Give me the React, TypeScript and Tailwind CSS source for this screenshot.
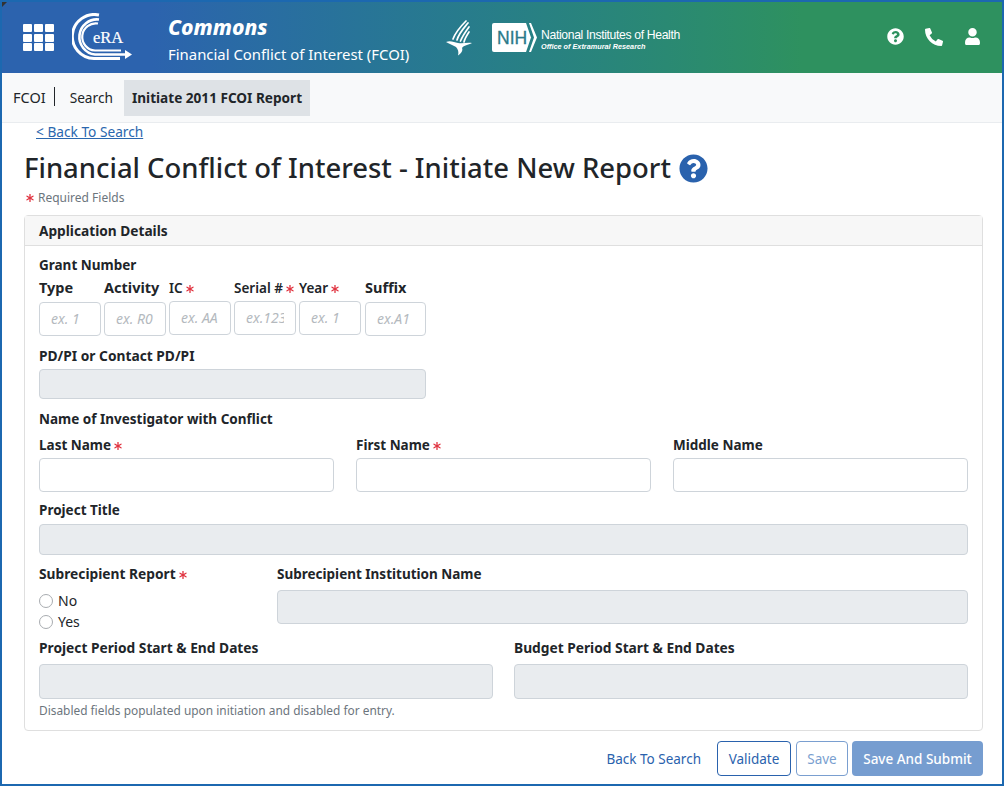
import { FaQuestionCircle, FaPhoneAlt, FaUser } from 'react-icons/fa';

const labelCls = 'block h-5 text-[13.5px] leading-5 font-bold text-[#212529] whitespace-nowrap';
const wideLabelCls = 'block h-5 text-[13.75px] leading-5 font-bold text-[#212529] whitespace-nowrap';
const inputCls = 'block border border-[#ced4da] rounded-[4px] bg-white';
const disabledCls = 'block border border-[#ced4da] rounded-[4px] bg-[#e9ecef]';

function Star({ className = 'ml-[3px]' }: { className?: string }) {
  return (
    <svg width="8" height="8" viewBox="0 0 8 8" className={`inline-block align-[0px] ${className}`}>
      <g stroke="#e0323f" strokeWidth="1.3" strokeLinecap="round">
        <path d="M4 0.5 V7.5" />
        <path d="M1 2.2 L7 5.8" />
        <path d="M7 2.2 L1 5.8" />
      </g>
    </svg>
  );
}

function EraLogo() {
  return (
    <svg width="60" height="49" viewBox="0 0 60 49" fill="none" className="shrink-0">
      <g stroke="#fff" fill="none" strokeLinecap="butt">
        <path d="M27 2 A 22 22 0 1 0 22 45.5 H 48" strokeWidth="3" />
        <path d="M27 6.5 A 17.6 17.6 0 1 0 23 41.5 H 54" strokeWidth="2.6" />
        <path d="M26 10.5 A 13.6 13.6 0 1 0 23 37.5 H 49" strokeWidth="2.2" />
      </g>
      <path d="M53 37 L60 41.6 L53 46 Z" fill="#fff" />
      <text x="21" y="30" fill="#fff" stroke="#fff" strokeWidth="0.2" fontSize="16.5" fontFamily="'Liberation Serif', serif">
        eRA
      </text>
    </svg>
  );
}

function Eagle() {
  return (
    <svg width="27" height="36" viewBox="0 0 27 36" fill="none" className="shrink-0">
      <g stroke="#fff" strokeWidth="1.7" strokeLinecap="round">
        <path d="M21 1 C 16 6, 11 11, 8 19" />
        <path d="M23 3 C 19 8, 14 13, 12 20" />
        <path d="M24 7 C 21 11, 18 15, 15.5 21" />
        <path d="M24 12 C 22 15, 20 18, 19 22" />
      </g>
      <path d="M1 22 C 5 20, 9 22, 13 23 C 18 24, 22 22, 27 23 C 23 25, 19 25, 17 28 C 18 30, 17 33, 13 35.5 C 14 32, 13 29, 11 27 C 8 25, 4 24, 1 22 Z" fill="#fff" />
    </svg>
  );
}

function NihLogo() {
  return (
    <div className="flex items-center shrink-0">
      <svg width="45" height="29" viewBox="0 0 45 29" className="shrink-0">
        <path d="M2 0 H 34 L 39 14.5 L 34 29 H 2 A 2 2 0 0 1 0 27 V 2 A 2 2 0 0 1 2 0 Z" fill="#fff" />
        <path d="M37 0 H 39 L 45 14.5 L 39 29 H 37 L 42 14.5 Z" fill="#fff" />
        <text x="5" y="20.5" fill="#2a7a8a" stroke="#2a7a8a" strokeWidth="0.3" fontSize="17.5" fontFamily="'Liberation Sans', sans-serif">
          NIH
        </text>
      </svg>
      <div className="ml-[4px] font-['Liberation_Sans',sans-serif] text-white mt-[4px]">
        <div className="text-[12.2px] leading-[13px] tracking-[-0.35px]">National Institutes of Health</div>
        <div className="text-[7.3px] leading-[9px] italic font-bold">Office of Extramural Research</div>
      </div>
    </div>
  );
}

function AppGrid() {
  return (
    <div className="grid grid-cols-3 gap-x-[2px] gap-y-[1.5px] w-[31px] shrink-0">
      {Array.from({ length: 9 }).map((_, i) => (
        <div key={i} className="h-[8px] bg-white rounded-[1px]" />
      ))}
    </div>
  );
}

const grantCols = [
  { label: 'Type', ph: 'ex. 1', low: true, req: false, w: 'w-[62px]', ml: '' },
  { label: 'Activity', ph: 'ex. R0', low: true, req: false, w: 'w-[62px]', ml: 'ml-[3px]' },
  { label: 'IC', ph: 'ex. AA', low: false, req: true, w: 'w-[62px]', ml: 'ml-[3px]' },
  { label: 'Serial #', ph: 'ex.123', low: false, req: true, w: 'w-[62px]', ml: 'ml-[3px]' },
  { label: 'Year', ph: 'ex. 1', low: false, req: true, w: 'w-[62px]', ml: 'ml-[3px]' },
  { label: 'Suffix', ph: 'ex.A1', low: true, req: false, w: 'w-[61px]', ml: 'ml-[4px]' },
];

function GrantCol({ label, ph, low, req, w, ml }: (typeof grantCols)[number]) {
  return (
    <div className={`${w} ${ml}`}>
      {low ? (
        <div className="text-[14.5px] leading-5 h-5 font-bold text-[#212529] whitespace-nowrap">{label}</div>
      ) : (
        <div className="text-[13.5px] leading-5 h-5 mt-[1px] font-semibold text-[#212529] whitespace-nowrap">
          {label}
          {req && <Star />}
        </div>
      )}
      <div
        className={`${inputCls} h-[34px] px-[11px] text-[14px] leading-[31px] italic text-[#b4b9be] ${
          low ? 'mt-[5px]' : 'mt-[3px]'
        }`}
      >
        <div className="overflow-hidden whitespace-nowrap">{ph}</div>
      </div>
    </div>
  );
}

function Radio({ label }: { label: string }) {
  return (
    <div className="flex items-center h-[21px]">
      <span className="w-[14px] h-[14px] rounded-full border border-[#a8acb0] bg-white shrink-0" />
      <span className="ml-[5px] text-[14px] text-[#212529]">{label}</span>
    </div>
  );
}

export default function App() {
  return (
    <div className="relative w-[1004px] h-[786px] border-2 border-[#1c68b0] bg-white overflow-hidden font-['Noto_Sans','Open_Sans',sans-serif] text-[#212529]">
      <svg width="5" height="5" viewBox="0 0 5 5" className="absolute left-0 top-0">
        <path d="M0 0 H5 L0 5 Z" fill="#333" />
      </svg>

      {/* banner */}
      <header className="h-[71px] flex items-center bg-gradient-to-r from-[#2c63ae] from-[15%] to-[#2e915f] to-[80%] text-white pl-[21px]">
        <AppGrid />
        <div className="ml-[18px] mt-[-1px]">
          <EraLogo />
        </div>
        <div className="ml-[36px] w-[270px] mt-[4px]">
          <div className="text-[21px] leading-7 font-extrabold italic">Commons</div>
          <div className="text-[14.9px] leading-6 mt-[1px] whitespace-nowrap">Financial Conflict of Interest (FCOI)</div>
        </div>
        <div className="ml-[7px] mt-[1px]">
          <Eagle />
        </div>
        <div className="ml-[20px]">
          <NihLogo />
        </div>
        <div className="ml-auto flex items-center gap-[21px] pr-[21px] mt-[-2px]">
          <FaQuestionCircle className="text-[17px]" />
          <FaPhoneAlt className="text-[18px]" />
          <FaUser className="text-[17px]" />
        </div>
      </header>

      {/* sub nav */}
      <nav className="h-[50px] bg-[#f8f9fa] border-b border-[#e9ecef] flex items-start pl-[11px] pt-[7px]">
        <div className="h-[36px] flex items-center text-[14.5px] pr-[9px] relative">
          FCOI
          <span className="absolute right-0 top-[7px] w-px h-[19px] bg-[#212529]" />
        </div>
        <div className="h-[36px] flex items-center text-[13.7px] ml-[15px]">Search</div>
        <div className="h-[36px] flex items-center text-[13.6px] font-bold bg-[#dee2e6] px-[8px] ml-[11px]">Initiate 2011 FCOI Report</div>
      </nav>

      <main className="pl-[22px] pr-[19px]">
        <div className="pl-[12px] h-[18px] text-[13.7px] leading-[17px]">
          <a className="text-[#2a67ae] underline">&lt; Back To Search</a>
        </div>
        <div className="flex items-center h-[38px] mt-[8px]">
          <h1 className="text-[27.45px] leading-[38px] font-medium whitespace-nowrap">Financial Conflict of Interest - Initiate New Report</h1>
          <FaQuestionCircle className="ml-[8px] text-[#2a62ad] text-[29px]" />
        </div>
        <div className="h-5 mt-[1px] text-[12px] leading-5 text-[#6c757d] pl-[2px]">
          <Star className="mr-[4px]" />
          Required Fields
        </div>

        <section className="mt-[7px] border border-[#dfdfdf] rounded-[4px] h-[516px]">
          <div className="h-[30px] bg-[#f7f7f7] border-b border-[#dfdfdf] px-[14px] text-[13.7px] leading-[30px] font-bold">Application Details</div>
          <div className="px-[14px] pt-[9px]">
            <div className={labelCls}>Grant Number</div>
            <div className="flex items-start mt-[2px]">
              {grantCols.map((c) => (
                <GrantCol key={c.label} {...c} />
              ))}
            </div>

            <div className={`${wideLabelCls} mt-[10px]`}>PD/PI or Contact PD/PI</div>
            <div className={`${disabledCls} w-[387px] h-[30px] mt-[3px]`} />

            <div className={`${labelCls} mt-[10px]`}>Name of Investigator with Conflict</div>
            <div className="grid grid-cols-3 gap-x-[22px] mt-[6px]">
              {[
                { label: 'Last Name', req: true },
                { label: 'First Name', req: true },
                { label: 'Middle Name', req: false },
              ].map((f) => (
                <div key={f.label}>
                  <div className={labelCls}>
                    {f.label}
                    {f.req && <Star />}
                  </div>
                  <div className={`${inputCls} h-[34px] mt-[3px]`} />
                </div>
              ))}
            </div>

            <div className={`${labelCls} mt-[8px]`}>Project Title</div>
            <div className={`${disabledCls} h-[31px] mt-[4px]`} />

            <div className="flex mt-[9px]">
              <div className="w-[238px] shrink-0">
                <div className={wideLabelCls}>
                  Subrecipient Report
                  <Star />
                </div>
                <div className="mt-[6px]">
                  <Radio label="No" />
                  <Radio label="Yes" />
                </div>
              </div>
              <div className="flex-1">
                <div className={labelCls}>Subrecipient Institution Name</div>
                <div className={`${disabledCls} h-[34px] mt-[6px]`} />
              </div>
            </div>

            <div className="grid grid-cols-2 gap-x-[21px] mt-[6px]">
              <div>
                <div className={wideLabelCls}>Project Period Start &amp; End Dates</div>
                <div className={`${disabledCls} h-[35px] mt-[6px]`} />
              </div>
              <div>
                <div className={wideLabelCls}>Budget Period Start &amp; End Dates</div>
                <div className={`${disabledCls} h-[35px] mt-[6px]`} />
              </div>
            </div>
            <div className="h-5 mt-[1px] text-[11.9px] leading-5 text-[#6c757d]">Disabled fields populated upon initiation and disabled for entry.</div>
          </div>
        </section>

        <div className="flex justify-end items-center mt-[10px] text-[13.5px]">
          <a className="text-[#2a62ad] mr-[16px] pt-[1px]">Back To Search</a>
          <button className="h-[35px] w-[74px] pt-[1px] border border-[#2a62ad] rounded-[4px] text-[#2a62ad]">Validate</button>
          <button className="h-[35px] w-[52px] ml-[5px] pt-[1px] border border-[#7a9fd0] rounded-[4px] text-[#7a9fd0]">Save</button>
          <button className="h-[35px] w-[131px] ml-[4px] pt-[1px] bg-[#769dd0] rounded-[4px] text-white font-medium">Save And Submit</button>
        </div>
      </main>
    </div>
  );
}
